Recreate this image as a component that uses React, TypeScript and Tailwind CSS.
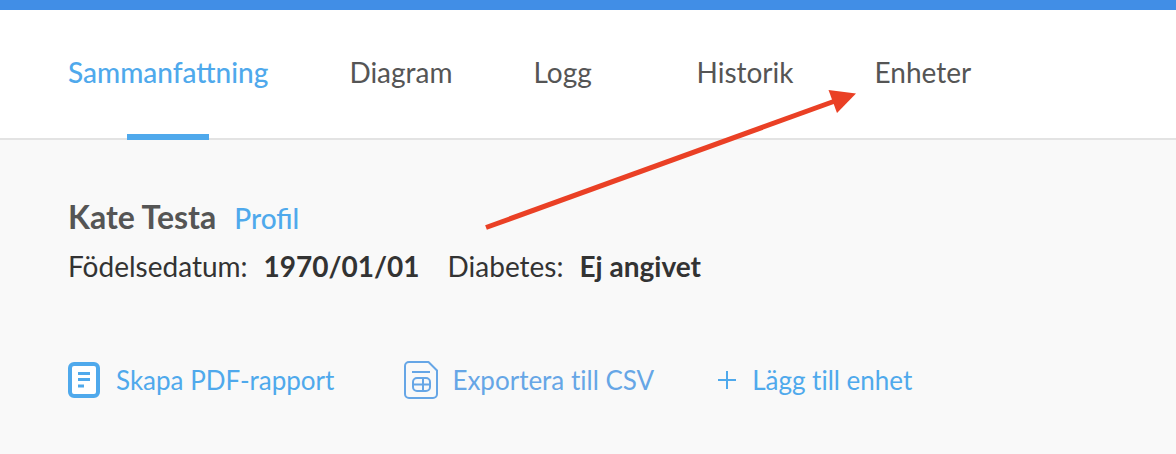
import React from "react";
import clsx from "clsx";

const tabs = ["Sammanfattning", "Diagram", "Logg", "Historik", "Enheter"];

function ReportIcon() {
  return (
    <svg width="32" height="36" viewBox="0 0 32 36" fill="none" className="shrink-0" aria-hidden="true">
      <rect x="2" y="2" width="28" height="32" rx="4" fill="#fff" stroke="#4fa9ec" strokeWidth="4" />
      <path d="M10 11.500h12M10 17.500h12M10 24h6" stroke="#4fa9ec" strokeWidth="3" />
    </svg>
  );
}

function CsvIcon() {
  return (
    <svg
      width="34"
      height="38"
      viewBox="0 0 34 38"
      fill="none"
      stroke="#66a6e6"
      strokeWidth="2"
      strokeLinejoin="round"
      className="shrink-0"
      aria-hidden="true"
    >
      <path d="M5 1h19.500l8.500 8.500V33a4 4 0 0 1-4 4H5a4 4 0 0 1-4-4V5a4 4 0 0 1 4-4z" />
      <path d="M8 11h18" />
      <rect x="9" y="17" width="17" height="13" rx="4" />
      <path d="M9 23.500h17M19 17v13" />
    </svg>
  );
}

function PlusIcon() {
  return (
    <svg width="18" height="18" viewBox="0 0 18 18" className="shrink-0" aria-hidden="true">
      <path d="M0 9h18M9 0v18" stroke="#4fa9ec" strokeWidth="2" />
    </svg>
  );
}

function Tabs({ active }: { active: string }) {
  return (
    <nav className="flex gap-[81px] border-b-2 border-[#e3e3e3] bg-white px-[68px]">
      {tabs.map((tab) => (
        <a
          key={tab}
          href={`#${tab.toLowerCase()}`}
          aria-current={tab === active ? "page" : undefined}
          className={clsx(
            "relative flex h-32 min-w-[82px] items-center pb-1 text-[28px]",
            tab === active ? "font-medium text-[#4fa9ec]" : "text-[#555]"
          )}
        >
          {tab}
          {tab === active && (
            <span className="absolute -bottom-0.5 left-1/2 h-1.5 w-[82px] -translate-x-1/2 bg-[#4fa9ec]" />
          )}
        </a>
      ))}
    </nav>
  );
}

function PatientInfo() {
  return (
    <section>
      <div className="flex items-baseline gap-[18px]">
        <h1 className="text-[32px] leading-12 font-bold text-[#555]">Kate Testa</h1>
        <a href="#profil" className="text-[28px] leading-10 font-medium text-[#4fa9ec]">
          Profil
        </a>
      </div>
      <dl className="mt-px flex gap-7 text-[28px] leading-12 text-[#333]">
        <div className="flex gap-4">
          <dt>Födelsedatum:</dt>
          <dd className="font-bold">1970/01/01</dd>
        </div>
        <div className="flex gap-4">
          <dt>Diabetes:</dt>
          <dd className="font-bold">Ej angivet</dd>
        </div>
      </dl>
    </section>
  );
}

function Actions() {
  return (
    <div className="mt-[70px] flex items-center text-[26px] leading-10 text-[#4fa9ec] [font-variant-ligatures:none]">
      <button type="button" className="flex cursor-pointer items-center gap-4">
        <ReportIcon />
        Skapa PDF-rapport
      </button>
      <button type="button" className="ml-[70px] flex cursor-pointer items-center gap-3.5 text-[#66a6e6]">
        <CsvIcon />
        Exportera till CSV
      </button>
      <button type="button" className="ml-16 flex cursor-pointer items-center gap-4">
        <PlusIcon />
        Lägg till enhet
      </button>
    </div>
  );
}

export default function App() {
  return (
    <div className="relative min-h-screen bg-[#f9f9f9] font-['Lato',sans-serif]">
      <div className="h-2.5 bg-[#418ee6]" />
      <Tabs active="Sammanfattning" />
      <main className="px-[68px] pt-[53px]">
        <PatientInfo />
        <Actions />
      </main>

      {/* callout arrow pointing at the devices tab */}
      <svg
        width="372"
        height="142"
        viewBox="0 0 372 142"
        className="pointer-events-none absolute top-[89px] left-[485px]"
        aria-hidden="true"
      >
        <path d="M1 138.500L350 12" stroke="#ea4025" strokeWidth="5" />
        <path d="M343.500 1L371 4.500L352 24z" fill="#ea4025" />
      </svg>
    </div>
  );
}
